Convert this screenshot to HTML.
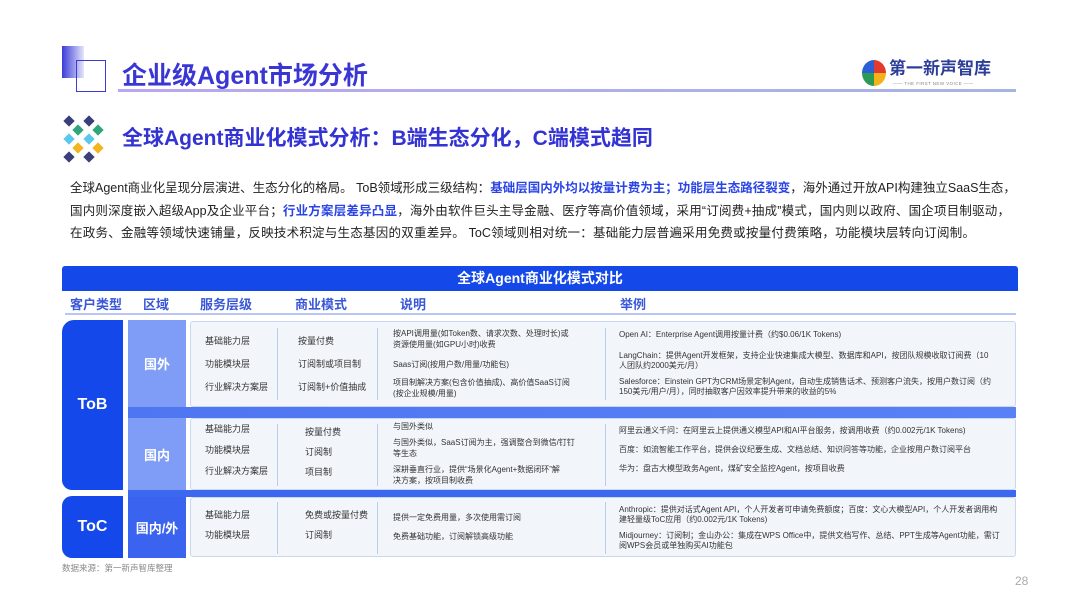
<!DOCTYPE html>
<html><head><meta charset="utf-8"><style>
*{margin:0;padding:0;box-sizing:border-box}
body{width:1080px;height:608px;background:#fff;position:relative;overflow:hidden;font-family:"Liberation Sans","Noto Sans CJK SC",sans-serif;color:#222}
.a{position:absolute}
.line{position:absolute;left:70px;width:940px;font-size:12.5px;white-space:nowrap;text-align:justify;text-align-last:justify;color:#222}
.b{color:#2a44e6;font-weight:bold}
.ch{position:absolute;top:294px;font-size:13px;font-weight:bold;color:#3a57d8}
.panel{position:absolute;left:190px;width:826px;background:#f2f6fb;border:1px solid #c9d8f2;border-radius:3px}
.t{position:absolute;font-size:9px;color:#333;line-height:11px}
.e{font-size:8px !important;line-height:10px}
.vl{position:absolute;width:1px;background:#b9cdee}
.lab{position:absolute;color:#fff;font-weight:bold;display:flex;align-items:center;justify-content:center}
</style></head><body>
<div class="a" style="left:62px;top:46px;width:22px;height:32px;background:linear-gradient(90deg,#3b3bd8,#e6e6fb)"></div>
<div class="a" style="left:76px;top:60px;width:30px;height:32px;border:1.5px solid #3b3bd8"></div>
<div class="a" style="left:122px;top:56px;font-size:25px;font-weight:bold;color:#3a36d4">企业级Agent市场分析</div>
<div class="a" style="left:118px;top:89px;width:898px;height:3px;background:linear-gradient(90deg,#b9a8f0,#a8b4e0)"></div>
<div class="a" style="left:862px;top:60px;width:24px;height:26px;border-radius:50%;background:conic-gradient(#e23a2e 0 25%,#f3b21a 0 50%,#2a9a55 0 75%,#2a5fd8 0)"></div>
<div class="a" style="left:889px;top:59px;font-size:17px;font-weight:bold;color:#2c3d9a;line-height:20px">第一新声智库</div>
<div class="a" style="left:893px;top:81px;font-size:4.5px;color:#888;letter-spacing:.4px;line-height:5px">—— THE FIRST NEW VOICE ——</div>
<svg class="a" style="left:60px;top:114px" width="52" height="50">
<rect x="5" y="3" width="8" height="8" fill="#3a3f7a" transform="rotate(45 9 7)"/>
<rect x="25" y="3" width="8" height="8" fill="#3a3f7a" transform="rotate(45 29 7)"/>
<rect x="14" y="12" width="8" height="8" fill="#2ea57a" transform="rotate(45 18 16)"/>
<rect x="34" y="12" width="8" height="8" fill="#2ea57a" transform="rotate(45 38 16)"/>
<rect x="5" y="21" width="8" height="8" fill="#5bc6ee" transform="rotate(45 9 25)"/>
<rect x="25" y="21" width="8" height="8" fill="#5bc6ee" transform="rotate(45 29 25)"/>
<rect x="14" y="30" width="8" height="8" fill="#f3b51e" transform="rotate(45 18 34)"/>
<rect x="34" y="30" width="8" height="8" fill="#f3b51e" transform="rotate(45 38 34)"/>
<rect x="5" y="39" width="8" height="8" fill="#3a3f7a" transform="rotate(45 9 43)"/>
<rect x="25" y="39" width="8" height="8" fill="#3a3f7a" transform="rotate(45 29 43)"/>
</svg>
<div class="a" style="left:122px;top:122px;font-size:21px;font-weight:bold;color:#3332d2">全球Agent商业化模式分析：B端生态分化，C端模式趋同</div>
<div class="line" style="top:177px">全球Agent商业化呈现分层演进、生态分化的格局。 ToB领域形成三级结构：<span class="b">基础层国内外均以按量计费为主；功能层生态路径裂变</span>，海外通过开放API构建独立SaaS生态，</div>
<div class="line" style="top:200px">国内则深度嵌入超级App及企业平台；<span class="b">行业方案层差异凸显</span>，海外由软件巨头主导金融、医疗等高价值领域，采用“订阅费+抽成”模式，国内则以政府、国企项目制驱动，</div>
<div class="line" style="top:222px;width:905px">在政务、金融等领域快速铺量，反映技术积淀与生态基因的双重差异。 ToC领域则相对统一：基础能力层普遍采用免费或按量付费策略，功能模块层转向订阅制。</div>
<div class="a" style="left:62px;top:266px;width:956px;height:25px;background:#1448e8;border-radius:3px 3px 0 0;color:#fff;font-size:14px;font-weight:bold;text-align:center;line-height:25px">全球Agent商业化模式对比</div>
<div class="ch" style="left:70px">客户类型</div>
<div class="ch" style="left:143px">区域</div>
<div class="ch" style="left:200px">服务层级</div>
<div class="ch" style="left:295px">商业模式</div>
<div class="ch" style="left:400px">说明</div>
<div class="ch" style="left:620px">举例</div>
<div class="a" style="left:65px;top:313px;width:951px;height:2px;background:#b8c6f4"></div>
<div class="lab" style="left:62px;top:320px;width:61px;height:170px;background:#1448ea;border-radius:12px 0 0 10px;font-size:16px">ToB</div>
<div class="lab" style="left:62px;top:496px;width:61px;height:62px;background:#1448ea;border-radius:10px 0 0 10px;font-size:16px">ToC</div>
<div class="lab" style="left:128px;top:320px;width:58px;height:87px;background:#7f9df6;font-size:13px">国外</div>
<div class="lab" style="left:128px;top:418px;width:58px;height:72px;background:#7f9df6;font-size:13px">国内</div>
<div class="lab" style="left:128px;top:497px;width:58px;height:61px;background:#3a63ef;font-size:13px">国内/外</div>
<div class="a" style="left:128px;top:407px;width:888px;height:11px;background:linear-gradient(90deg,#4f76f2,#5a80f5)"></div>
<div class="a" style="left:128px;top:490px;width:888px;height:7px;background:#3c68f0"></div>
<div class="panel" style="top:321px;height:86px"></div>
<div class="panel" style="top:418px;height:72px"></div>
<div class="panel" style="top:497px;height:60px"></div>
<div class="vl" style="left:277px;top:328px;height:72px"></div>
<div class="vl" style="left:377px;top:328px;height:72px"></div>
<div class="vl" style="left:605px;top:328px;height:72px"></div>
<div class="vl" style="left:277px;top:424px;height:62px"></div>
<div class="vl" style="left:377px;top:424px;height:62px"></div>
<div class="vl" style="left:605px;top:424px;height:62px"></div>
<div class="vl" style="left:277px;top:502px;height:52px"></div>
<div class="vl" style="left:377px;top:502px;height:52px"></div>
<div class="vl" style="left:605px;top:502px;height:52px"></div>
<div class="t" style="left:205px;top:336px">基础能力层</div>
<div class="t" style="left:205px;top:359px">功能模块层</div>
<div class="t" style="left:205px;top:382px">行业解决方案层</div>
<div class="t" style="left:298px;top:336px">按量付费</div>
<div class="t" style="left:298px;top:359px">订阅制或项目制</div>
<div class="t" style="left:298px;top:382px">订阅制+价值抽成</div>
<div class="t" style="left:393px;top:328px;font-size:8px">按API调用量(如Token数、请求次数、处理时长)或<br>资源使用量(如GPU小时)收费</div>
<div class="t" style="left:393px;top:359px;font-size:8px">Saas订阅(按用户数/用量/功能包)</div>
<div class="t" style="left:393px;top:377px;font-size:8px">项目制解决方案(包含价值抽成)、高价值SaaS订阅<br>(按企业规模/用量)</div>
<div class="t e" style="left:619px;top:330px">Open AI：Enterprise Agent调用按量计费（约$0.06/1K Tokens)</div>
<div class="t e" style="left:619px;top:351px">LangChain：提供Agent开发框架，支持企业快速集成大模型、数据库和API，按团队规模收取订阅费（10<br>人团队约2000美元/月）</div>
<div class="t e" style="left:619px;top:377px">Salesforce：Einstein GPT为CRM场景定制Agent，自动生成销售话术、预测客户流失，按用户数订阅（约<br>150美元/用户/月），同时抽取客户因效率提升带来的收益的5%</div>
<div class="t" style="left:205px;top:424px">基础能力层</div>
<div class="t" style="left:205px;top:445px">功能模块层</div>
<div class="t" style="left:205px;top:466px">行业解决方案层</div>
<div class="t" style="left:305px;top:427px">按量付费</div>
<div class="t" style="left:305px;top:447px">订阅制</div>
<div class="t" style="left:305px;top:467px">项目制</div>
<div class="t" style="left:393px;top:421px;font-size:8px">与国外类似</div>
<div class="t" style="left:393px;top:437px;font-size:8px">与国外类似，SaaS订阅为主，强调整合到微信/钉钉<br>等生态</div>
<div class="t" style="left:393px;top:464px;font-size:8px">深耕垂直行业，提供“场景化Agent+数据闭环”解<br>决方案，按项目制收费</div>
<div class="t e" style="left:619px;top:426px">阿里云通义千问：在阿里云上提供通义模型API和AI平台服务，按调用收费（约0.002元/1K Tokens)</div>
<div class="t e" style="left:619px;top:445px">百度：如流智能工作平台，提供会议纪要生成、文档总结、知识问答等功能，企业按用户数订阅平台</div>
<div class="t e" style="left:619px;top:464px">华为：盘古大模型政务Agent，煤矿安全监控Agent，按项目收费</div>
<div class="t" style="left:205px;top:510px">基础能力层</div>
<div class="t" style="left:205px;top:530px">功能模块层</div>
<div class="t" style="left:305px;top:510px">免费或按量付费</div>
<div class="t" style="left:305px;top:530px">订阅制</div>
<div class="t" style="left:393px;top:512px;font-size:8px">提供一定免费用量，多次使用需订阅</div>
<div class="t" style="left:393px;top:531px;font-size:8px">免费基础功能，订阅解锁高级功能</div>
<div class="t e" style="left:619px;top:505px">Anthropic：提供对话式Agent API，个人开发者可申请免费额度；百度：文心大模型API，个人开发者调用构<br>建轻量级ToC应用（约0.002元/1K Tokens)</div>
<div class="t e" style="left:619px;top:531px">Midjourney：订阅制；金山办公：集成在WPS Office中，提供文档写作、总结、PPT生成等Agent功能，需订<br>阅WPS会员或单独购买AI功能包</div>
<div class="a" style="left:62px;top:562px;font-size:8.5px;color:#888">数据来源：第一新声智库整理</div>
<div class="a" style="left:1015px;top:574px;font-size:12px;color:#aaa">28</div>
</body></html>
